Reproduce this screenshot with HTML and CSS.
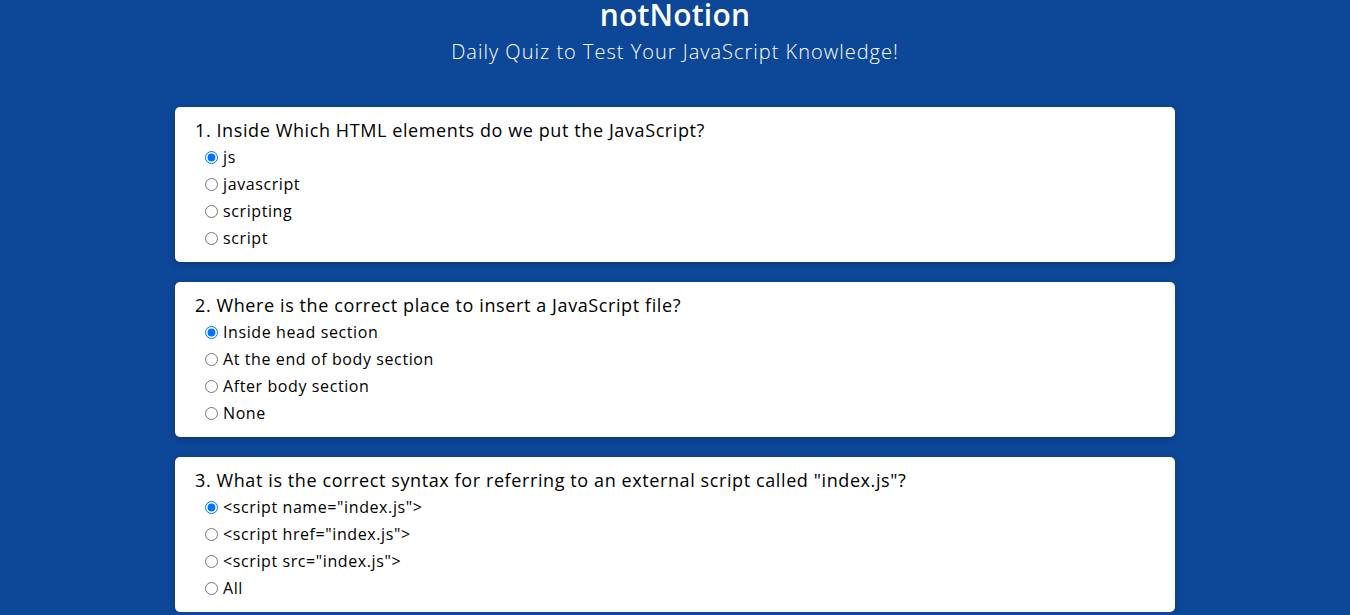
FILE: index.html
```html
<!DOCTYPE html>
<html lang="en">
<head>
<meta charset="utf-8">
<title>notNotion Quiz</title>
<link rel="stylesheet" href="styles.css">
</head>
<body>
<header class="header">
  <h1 class="title">notNotion</h1>
  <p class="subtitle">Daily Quiz to Test Your JavaScript Knowledge!</p>
</header>
<main class="quiz">
  <section class="card">
    <p class="question">1. Inside Which HTML elements do we put the JavaScript?</p>
    <label class="option"><input type="radio" name="q1" checked>js</label>
    <label class="option"><input type="radio" name="q1">javascript</label>
    <label class="option"><input type="radio" name="q1">scripting</label>
    <label class="option"><input type="radio" name="q1">script</label>
  </section>
  <section class="card">
    <p class="question">2. Where is the correct place to insert a JavaScript file?</p>
    <label class="option"><input type="radio" name="q2" checked>Inside head section</label>
    <label class="option"><input type="radio" name="q2">At the end of body section</label>
    <label class="option"><input type="radio" name="q2">After body section</label>
    <label class="option"><input type="radio" name="q2">None</label>
  </section>
  <section class="card">
    <p class="question">3. What is the correct syntax for referring to an external script called "index.js"?</p>
    <label class="option"><input type="radio" name="q3" checked>&lt;script name="index.js"&gt;</label>
    <label class="option"><input type="radio" name="q3">&lt;script href="index.js"&gt;</label>
    <label class="option"><input type="radio" name="q3">&lt;script src="index.js"&gt;</label>
    <label class="option"><input type="radio" name="q3">All</label>
  </section>
</main>
</body>
</html>
```
FILE: styles.css
```css
html, body {
  margin: 0;
  padding: 0;
}
body {
  background: #0d4798;
  font-family: "Open Sans", "Liberation Sans", sans-serif;
  color: #000;
  overflow: hidden;
}
.header {
  display: flex;
  flex-direction: column;
  align-items: center;
  color: #fff;
}
.title {
  margin: 0;
  font-size: 30px;
  font-weight: 600;
  line-height: 30px;
  letter-spacing: 0.2px;
}
.subtitle {
  margin: 7px 0 0;
  font-size: 20px;
  font-weight: 300;
  line-height: 30px;
  letter-spacing: 1px;
}
.quiz {
  display: flex;
  flex-direction: column;
  align-items: center;
  gap: 20px;
  margin-top: 40px;
}
.card {
  box-sizing: border-box;
  width: 1000px;
  background: #fff;
  border-radius: 5px;
  padding: 10px 20px;
  box-shadow: 0 2px 6px rgba(0, 0, 0, 0.25);
}
.question {
  margin: 0;
  font-size: 18px;
  line-height: 27px;
  letter-spacing: 0.6px;
}
.option {
  display: flex;
  align-items: center;
  padding-left: 5px;
  font-size: 16px;
  line-height: 27px;
  height: 27px;
  letter-spacing: 0.6px;
}
.option input {
  margin: 0 5px 0 5px;
  width: 13px;
  height: 13px;
}
```
